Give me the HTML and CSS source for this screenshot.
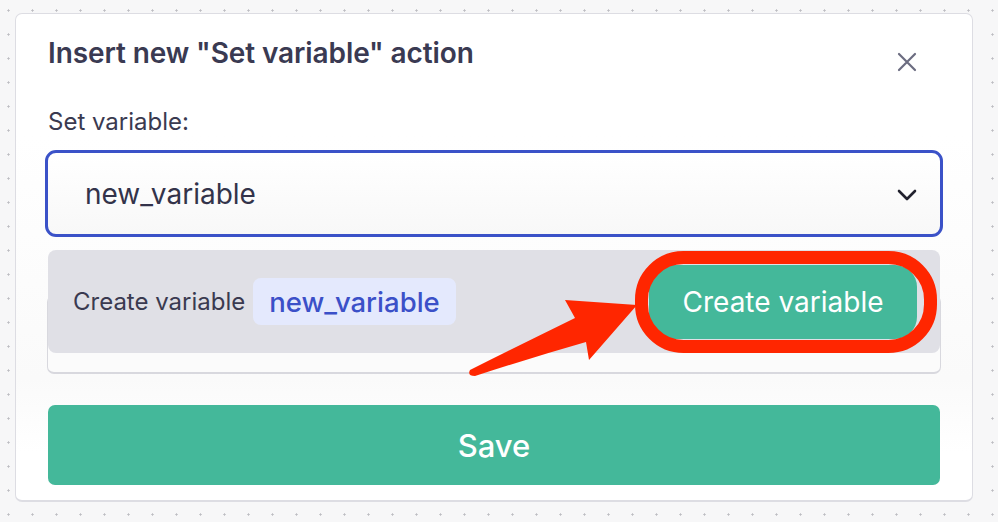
FILE: index.html
```html
<!DOCTYPE html>
<html lang="en">
<head>
<meta charset="utf-8">
<title>Insert new "Set variable" action</title>
<link rel="stylesheet" href="styles.css">
</head>
<body>
<div class="card">
  <div class="header">
    <h2 class="title">Insert new "Set variable" action</h2>
    <button class="close" aria-label="Close">
      <svg width="20" height="20" viewBox="0 0 20 20"><path d="M2 2L18 18M18 2L2 18" stroke="#6b6c80" stroke-width="2.2" stroke-linecap="round" fill="none"/></svg>
    </button>
  </div>
  <label class="label">Set variable:</label>
  <div class="select-wrap">
    <div class="select">
      <span class="value">new_variable</span>
      <svg class="chevron" width="20" height="12" viewBox="0 0 20 12"><path d="M2 2L10 10L18 2" stroke="#22222e" stroke-width="2.6" stroke-linecap="round" stroke-linejoin="round" fill="none"/></svg>
    </div>
    <div class="menu">
      <span class="menu-text">Create variable</span>
      <span class="chip">new_variable</span>
      <button class="create">Create variable</button>
    </div>
  </div>
  <div class="field"></div>
  <button class="save">Save</button>
</div>
<svg class="annot" width="998" height="522" viewBox="0 0 998 522">
  <rect x="641.5" y="257.5" width="289" height="89" rx="42" ry="42" fill="none" stroke="#ff2600" stroke-width="13"/>
  <path d="M470 370 Q520 345 575 318 L565 300 L637 305 L589 360 L586 342 Q530 358 475 376 Q467 376 470 370 Z" fill="#ff2600"/>
</svg>
</body>
</html>
```

FILE: styles.css
```css
* { box-sizing: border-box; }
html, body { margin: 0; padding: 0; }
body {
  width: 998px;
  height: 522px;
  overflow: hidden;
  position: relative;
  background-color: #f7f7f8;
  background-image: radial-gradient(circle at 8.5px 10.5px, #bdbdc2 0.9px, transparent 1.3px);
  background-size: 24px 24px;
  font-family: Inter, "Noto Sans", sans-serif;
  color: #3a3a50;
}
.card {
  margin: 13px 0 0 15px;
  width: 958px;
  height: 489px;
  background: linear-gradient(#ffffff 0%, #ffffff 25%, #fafafa 75%, #ffffff 90%);
  border: 1px solid #dddde3;
  border-bottom-width: 2px;
  border-radius: 7px;
  padding: 22px 32px 0 32px;
  display: flex;
  flex-direction: column;
}
.header {
  display: flex;
  justify-content: space-between;
  align-items: flex-start;
  height: 34px;
}
.title {
  margin: 0;
  font-size: 28px;
  line-height: 34px;
  font-weight: 600;
  color: #3a3a52;
  letter-spacing: -0.1px;
}
.close {
  border: none;
  background: none;
  padding: 0;
  margin: 16px 23px 0 0;
  width: 20px;
  height: 20px;
  display: flex;
}
.label {
  margin-top: 38px;
  font-size: 24px;
  line-height: 28px;
  color: #3a3a50;
}
.select-wrap {
  position: relative;
  margin-top: 14px;
}
.select {
  margin: 0 -3px;
  height: 87px;
  border: 3px solid #3b52c8;
  border-radius: 11px;
  background: linear-gradient(#ffffff, #f8f8f8);
  display: flex;
  align-items: center;
  justify-content: space-between;
  padding: 0 23px 0 37px;
}
.value {
  font-size: 28px;
  color: #33334a;
}
.chevron { margin-top: 2px; }
.menu {
  position: absolute;
  left: 0;
  right: 0;
  top: calc(100% + 13px);
  height: 103px;
  background: #e0e0e6;
  border-radius: 8px;
  display: flex;
  align-items: center;
  padding: 0 23px 0 25px;
  z-index: 2;
}
.menu-text {
  font-size: 24px;
  color: #3a3a50;
}
.chip {
  margin-left: 8px;
  height: 47px;
  padding: 0 16px;
  display: flex;
  align-items: center;
  background: #e4e9fd;
  border-radius: 8px;
  font-size: 27.5px;
  font-weight: 500;
  color: #3b50c8;
}
.create {
  margin-left: auto;
  width: 268px;
  height: 74px;
  border: none;
  border-radius: 22px;
  background: #44b89a;
  color: #ffffff;
  font-family: Inter, "Noto Sans", sans-serif;
  font-size: 28px;
}
.field {
  margin-top: 58px;
  height: 79px;
  margin-left: -1px;
  margin-right: -1px;
  border: 1px solid #d8d8de;
  border-bottom-width: 2px;
  border-radius: 7px;
  background: #fbfbfb;
}
.save {
  margin-top: 31px;
  height: 80px;
  border: none;
  border-radius: 7px;
  background: #44b89a;
  color: #ffffff;
  font-family: Inter, "Noto Sans", sans-serif;
  font-size: 31px;
  font-weight: 500;
}
.annot {
  position: absolute;
  left: 0;
  top: 0;
  z-index: 10;
  pointer-events: none;
}
```
